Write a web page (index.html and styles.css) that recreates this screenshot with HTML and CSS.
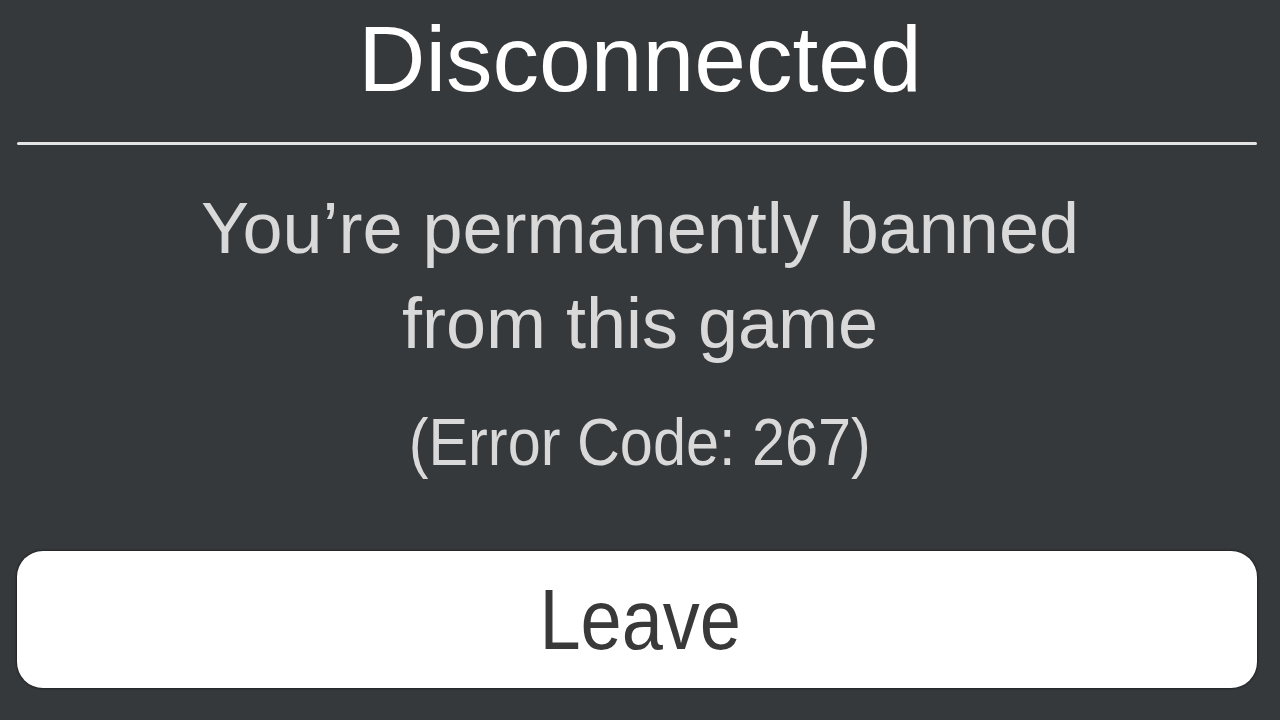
FILE: index.html
```html
<!DOCTYPE html>
<html lang="en">
<head>
    <meta charset="UTF-8">
    <meta name="viewport" content="width=device-width, initial-scale=1.0">
    <title>Disconnected</title>
    <link rel="stylesheet" href="styles.css">
</head>
<body>
    <div class="dialog">
        <h1 class="title">Disconnected</h1>
        <div class="divider"></div>
        <p class="message">You’re permanently banned<br>from this game</p>
        <p class="code"><span>(Error Code: 267)</span></p>
        <button class="leave"><span>Leave</span></button>
    </div>
</body>
</html>
```

FILE: styles.css
```css
body {
    margin: 0;
    background: #36393c;
    font-family: 'Liberation Sans', Arial, sans-serif;
    height: 720px;
    overflow: hidden;
}
.dialog {
    display: flex;
    flex-direction: column;
    align-items: center;
    padding: 0 17px;
}
.title {
    margin: 0;
    font-size: 93px;
    font-weight: normal;
    line-height: 118px;
    color: #fff;
}
.divider {
    align-self: stretch;
    height: 3px;
    margin: 24px 6px 0 0;
    background: #e4e4e4;
    border-radius: 2px;
}
.message {
    margin: 36px 0 0;
    font-size: 72px;
    line-height: 95px;
    text-align: center;
    color: #d9d9d9;
}
.code {
    margin: 31px 0 0;
    font-size: 66px;
    line-height: 80px;
    color: #d9d9d9;
}
.code span {
    display: inline-block;
    transform: scaleX(0.9);
}
.leave {
    align-self: stretch;
    margin: 69px 6px 0 0;
    height: 137px;
    padding: 0 0 0 6px;
    border: none;
    border-radius: 26px;
    background: #fff;
    box-shadow: 0 0 2px 1px rgba(0, 0, 0, 0.4);
    font-family: 'Liberation Sans', Arial, sans-serif;
    font-size: 86px;
    line-height: 137px;
    color: #393939;
}
.leave span {
    display: inline-block;
    transform: scaleX(0.86);
}
```
